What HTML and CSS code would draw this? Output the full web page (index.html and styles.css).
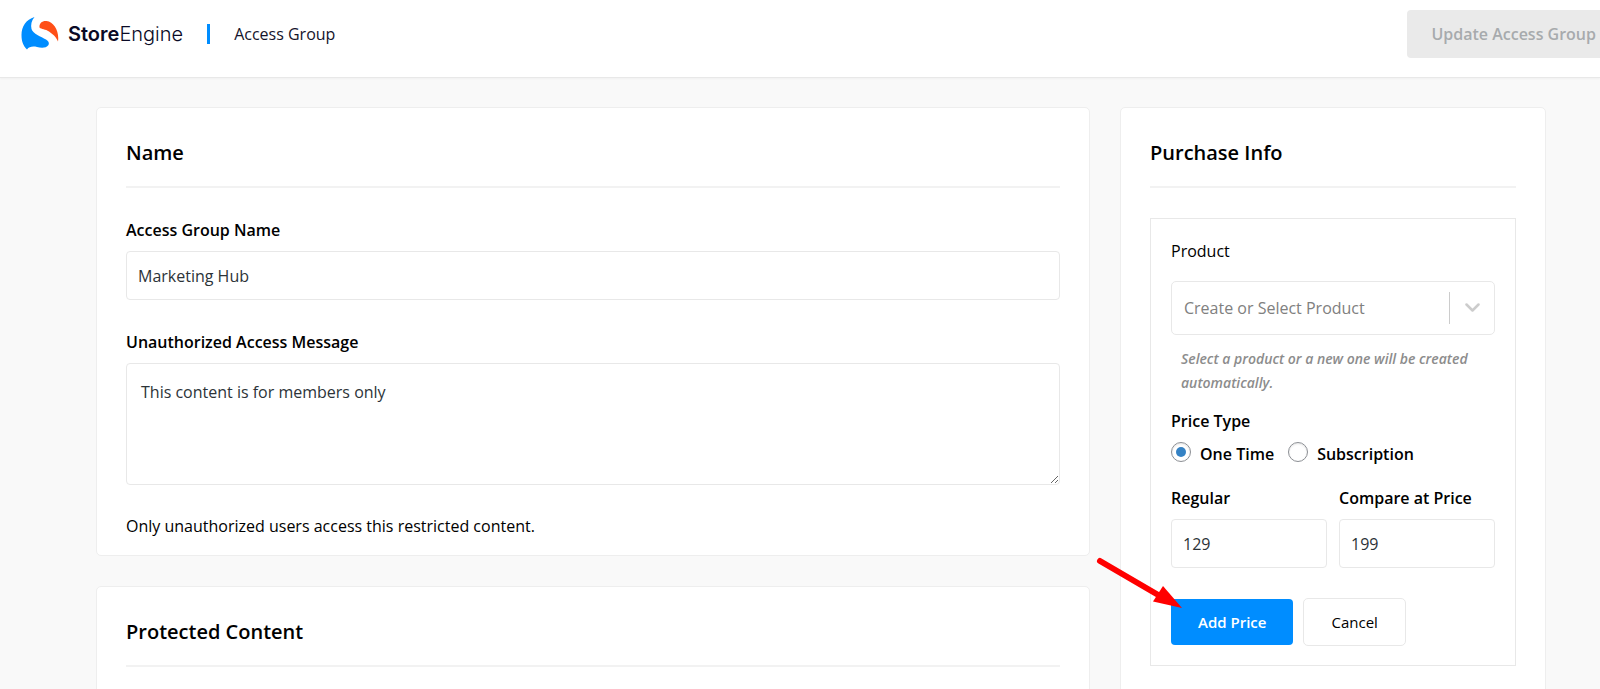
FILE: index.html
```html
<!doctype html>
<html lang="en">
<head>

<meta charset="utf-8">
<meta name="viewport" content="width=device-width, initial-scale=1">

<title>Access Group - StoreEngine</title>

<link rel="stylesheet" href="styles.css">

</head>
<body>

<header class="topbar">
	<a href="#" class="logo">
		<svg class="logo-mark" width="38" height="33" viewBox="0 0 38 33" aria-hidden="true">
			<path fill="#008dff" d="M13.5 0C5 2.500 0.500 9.500 0.500 18C0.500 24 2 28.500 6 32.500C8 29.500 12 29 16 30C20 31 25 31.500 27.500 28C28.500 26 27.500 24 25 22.500C20 19.500 12 17 10.500 12C9.500 8 10.500 3.500 13.500 0Z"/>
			<path fill="#ff4f17" d="M18.500 10.500C18 6.500 21 3.500 25.500 4C33 5 38.500 14 37 24.500C35 19.500 31.500 17 28 14.500C24.500 12 20.500 12.500 18.500 10.500Z"/>
		</svg>
		<span class="logo-text"><b>Store</b>Engine</span>
	</a>
	<span class="topbar-title">Access Group</span>
	<button type="button" class="btn-update" disabled>Update Access Group</button>
</header>

<main class="layout">
	<div class="column">
		<section class="card">
			<h2>Name</h2>

			<label for="group-name">Access Group Name</label>
			<input type="text" id="group-name" class="field" value="Marketing Hub">

			<label for="group-message">Unauthorized Access Message</label>
			<textarea id="group-message" class="field">This content is for members only</textarea>

			<p class="note">Only unauthorized users access this restricted content.</p>
		</section>

		<section class="card">
			<h2>Protected Content</h2>
		</section>
	</div>

	<div class="column">
		<section class="card card--tall">
			<h2>Purchase Info</h2>

			<form class="price-box">
				<label for="product" class="label-plain">Product</label>
				<div class="select">
					<select id="product">
						<option>Create or Select Product</option>
					</select>
					<svg class="select-arrow" width="15" height="10" viewBox="0 0 15 10" aria-hidden="true">
						<path d="M1.500 1.500L7.500 7.500L13.500 1.500" fill="none" stroke="#ccc" stroke-width="2.500" stroke-linecap="round" stroke-linejoin="round"/>
					</svg>
				</div>
				<p class="help">Select a product or a new one will be created automatically.</p>

				<fieldset>
					<legend>Price Type</legend>
					<div class="radios">
						<input type="radio" name="price-type" id="one-time" checked>
						<label for="one-time">One Time</label>
						<input type="radio" name="price-type" id="subscription">
						<label for="subscription">Subscription</label>
					</div>
				</fieldset>

				<div class="prices">
					<div>
						<label for="regular">Regular</label>
						<input type="text" id="regular" class="field" value="129">
					</div>
					<div>
						<label for="compare">Compare at Price</label>
						<input type="text" id="compare" class="field" value="199">
					</div>
				</div>

				<div class="actions">
					<button type="button" class="btn btn--primary">Add Price</button>
					<button type="button" class="btn">Cancel</button>
					<svg class="pointer" width="90" height="60" viewBox="0 0 90 60" aria-hidden="true">
						<path d="M6 7L66 42" stroke="#f00" stroke-width="6" stroke-linecap="round"/>
						<path d="M88 54L59 47.500L69 32Z" fill="#f00"/>
					</svg>
				</div>
			</form>
		</section>
	</div>
</main>

</body>
</html>
```

FILE: styles.css
```css
* {
	box-sizing: border-box;
}

body {
	margin: 0;
	overflow-x: hidden;
	background: #f9f9f9;
	color: #000;
	font-family: 'Open Sans', sans-serif;
	font-size: 16px;
	line-height: 24px;
}

input,
select,
textarea,
button {
	font: inherit;
	color: inherit;
}

/* top bar */

.topbar {
	display: flex;
	align-items: center;
	height: 78px;
	padding: 0 0 10px 21px;
	border-bottom: 1px solid #e8e8e8;
	background: #fff;
	box-shadow: 0 1px 2px rgba(0, 0, 0, 0.04);
}

.logo {
	display: flex;
	align-items: center;
	gap: 9px;
	padding-right: 24px;
	color: #0a0a26;
	text-decoration: none;
}

.logo-text {
	font-family: Inter, sans-serif;
	font-size: 20px;
	font-weight: 300;
}

.logo-text b {
	font-weight: 600;
}

.topbar-title {
	padding-left: 24px;
	color: #14142b;
	line-height: 20px;
	border-left: 3px solid #008dff;
}

.btn-update {
	flex: none;
	height: 48px;
	margin: 0 -20px 0 auto;
	padding: 0 24px;
	border: 0;
	border-radius: 4px;
	background: #eaeaea;
	color: #a7aaad;
	font-weight: 600;
}

/* cards */

.layout {
	display: grid;
	grid-template-columns: 7fr 3fr;
	gap: 30px;
	padding: 29px 54px 0 96px;
}

.column {
	display: flex;
	flex-direction: column;
	gap: 30px;
	min-width: 0;
}

.card {
	padding: 30px 29px 17px;
	border: 1px solid #eee;
	border-radius: 5px;
	background: #fff;
}

.card--tall {
	flex: 1;
}

h2 {
	margin: 0 0 30px;
	padding-bottom: 18px;
	border-bottom: 2px solid #f2f2f2;
	font-size: 20px;
	font-weight: 600;
	line-height: 30px;
}

label,
legend {
	display: block;
	padding: 0;
	font-weight: 600;
}

.label-plain {
	font-weight: 400;
}

.field {
	display: block;
	width: 100%;
	height: 49px;
	margin: 9px 0 30px;
	padding: 0 11px;
	border: 1px solid #e8e8e8;
	border-radius: 4px;
	background: #fff;
	color: #2c3338;
}

textarea.field {
	height: 122px;
	margin-bottom: 29px;
	padding: 16px 14px;
}

.note {
	margin: 0;
}

/* price form */

.price-box {
	padding: 20px 20px 19px;
	border: 1px solid #e8e8e8;
}

.select {
	position: relative;
	margin: 18px 0 12px;
}

.select select {
	display: block;
	width: 100%;
	height: 54px;
	padding: 0 50px 0 12px;
	border: 1px solid #e8e8e8;
	border-radius: 5px;
	background: linear-gradient(#ccc, #ccc) right 44px center / 1px 32px no-repeat #fff;
	color: #808080;
	appearance: none;
}

.select-arrow {
	position: absolute;
	top: 22px;
	right: 15px;
	pointer-events: none;
}

.help {
	margin: 0 0 14px;
	padding: 0 10px;
	color: #8c8c8c;
	font-size: 14px;
	font-style: italic;
	font-weight: 600;
}

fieldset {
	margin: 0 0 20px;
	padding: 0;
	border: 0;
}

.radios {
	display: flex;
	margin-top: 9px;
}

.radios label {
	margin: 0 14px 0 9px;
}

input[type="radio"] {
	display: flex;
	flex: none;
	width: 20px;
	height: 20px;
	margin: 0;
	border: 1px solid #8c8f94;
	border-radius: 50%;
	background: #fff;
	box-shadow: inset 0 1px 2px rgba(0, 0, 0, 0.1);
	appearance: none;
}

input[type="radio"]:checked::before {
	content: '';
	width: 10px;
	height: 10px;
	margin: 4px;
	border-radius: 50%;
	background: #3582c4;
}

.prices {
	display: grid;
	grid-template-columns: 1fr 1fr;
	gap: 12px;
}

.actions {
	display: flex;
	align-items: center;
	gap: 10px;
	position: relative;
}

.btn {
	height: 48px;
	padding: 0 27px;
	border: 1px solid #e8e8e8;
	border-radius: 5px;
	background: #fff;
	font-size: 15px;
	font-weight: 500;
}

.btn--primary {
	height: 46px;
	border: 0;
	border-radius: 4px;
	background: #008dff;
	color: #fff;
	font-weight: 600;
}

/* arrow laid over the Add Price button */
.pointer {
	position: absolute;
	top: -44px;
	left: -77px;
	pointer-events: none;
}
```
